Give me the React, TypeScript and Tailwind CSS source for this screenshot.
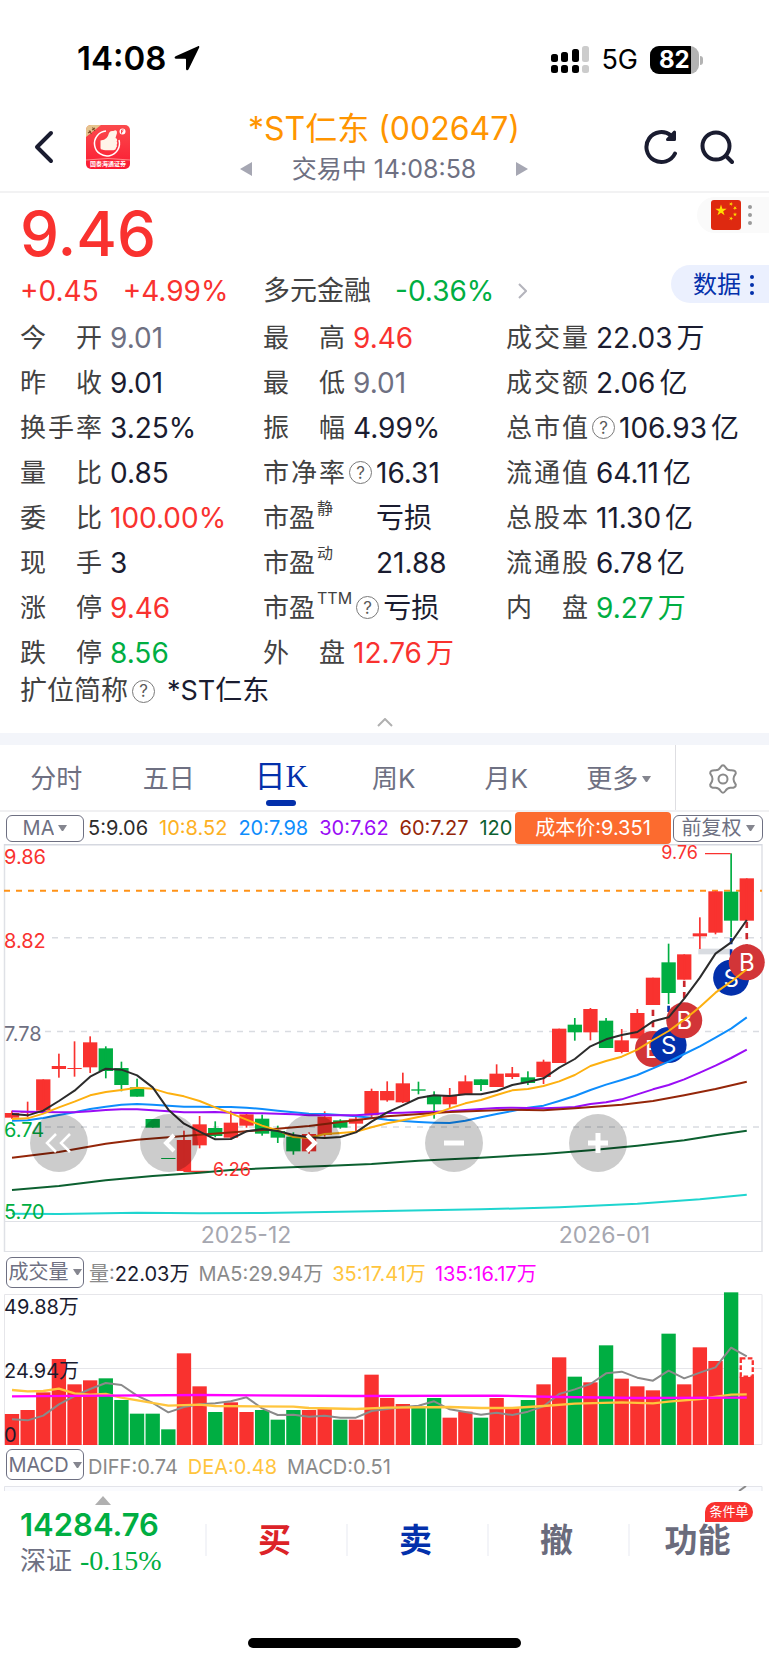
import { useState } from "react";
import clsx from "clsx";

// Chart data is stored in thirds of a pixel, one entry per trading day.
const UNIT = 1 / 3;
const FIRST_X = 36;
const STEP = 46.9;
const BODY = 43;

const RED = "#f9322f";
const GREEN = "#00ae42";

// [open/close top, open/close bottom, high, low]
const candles: [number, number, number, number][] = [
  [822, 836, 815, 840],
  [817, 821, 788, 835],
  [721, 815, 721, 815],
  [681, 690, 644, 716],
  [687, 690, 607, 713],
  [610, 685, 592, 702],
  [628, 696, 622, 718],
  [687, 738, 668, 757],
  [745, 773, 719, 773],
  [840, 866, 840, 866],
  [957, 960, 957, 960],
  [903, 996, 875, 998],
  [856, 919, 831, 928],
  [867, 891, 847, 895],
  [851, 896, 815, 898],
  [826, 860, 824, 866],
  [839, 884, 827, 890],
  [876, 896, 860, 912],
  [893, 937, 880, 947],
  [885, 937, 880, 944],
  [833, 888, 817, 893],
  [844, 866, 841, 869],
  [839, 854, 834, 880],
  [756, 829, 749, 835],
  [756, 784, 727, 788],
  [733, 790, 701, 792],
  [751, 755, 728, 766],
  [770, 796, 757, 839],
  [770, 796, 747, 808],
  [727, 766, 709, 766],
  [721, 738, 721, 756],
  [704, 744, 676, 744],
  [703, 714, 684, 720],
  [715, 732, 697, 738],
  [668, 714, 662, 735],
  [569, 672, 569, 672],
  [557, 580, 537, 605],
  [510, 580, 507, 604],
  [545, 627, 537, 627],
  [604, 639, 570, 643],
  [522, 598, 510, 598],
  [416, 498, 416, 498],
  [370, 462, 314, 495],
  [346, 422, 346, 422],
  [283, 292, 235, 330],
  [157, 281, 157, 286],
  [158, 245, 43, 295],
  [118, 245, 118, 245],
];

const fallingDays = [
  6, 7, 8, 9, 10, 13, 16, 17, 18, 21, 26, 27, 30, 33, 36, 38, 42, 46,
];

const volumeTops = [
  495, 483, 430, 330, 406, 394, 388, 453, 494, 494, 541, 313, 412, 489, 460,
  489, 483, 512, 483, 483, 480, 512, 512, 377, 447, 465, 475, 447, 506, 488,
  506, 447, 477, 453, 406, 325, 383, 400, 289, 389, 412, 424, 254, 406, 295,
  336, 130, 383,
];

const ma5 = [
  825, 829, 815, 786, 755, 713, 689, 692, 709, 745, 812, 854, 878, 901, 900,
  877, 870, 876, 888, 895, 897, 894, 880, 848, 820, 799, 777, 769, 771, 766,
  766, 756, 738, 729, 718, 686, 660, 622, 601, 588, 579, 547, 535, 479, 416,
  344, 310, 243,
];
const ma10 = [
  840, 838, 824, 805, 788, 769, 759, 753, 746, 749, 763, 772, 786, 805, 823,
  842, 860, 874, 894, 897, 885, 882, 878, 865, 853, 844, 834, 825, 808, 793,
  783, 768, 754, 750, 741, 727, 708, 681, 666, 653, 632, 603, 576, 542, 504,
  461, 428, 391,
];
const ma20 = [
  845, 844, 837, 828, 820, 810, 803, 797, 795, 797, 800, 803, 803, 804, 804,
  806, 810, 815, 820, 824, 825, 828, 832, 836, 842, 846, 849, 851, 852, 845,
  835, 825, 816, 806, 800, 786, 771, 753, 737, 723, 708, 688, 668, 645, 622,
  596, 569, 535,
];
const ma30 = [
  817, 818, 819, 820, 820, 817, 813, 811, 811, 814, 817, 820, 820, 819, 821,
  822, 823, 824, 826, 829, 829, 829, 829, 826, 822, 821, 819, 818, 817, 813,
  810, 807, 806, 807, 808, 806, 804, 795, 790, 781, 766, 751, 738, 721, 701,
  680, 657, 632,
];
const volumeMa5 = [
  511, 514, 500, 466, 441, 420, 402, 408, 440, 462, 490, 474, 466, 463, 457,
  445, 478, 498, 497, 503, 500, 506, 506, 486, 480, 474, 470, 457, 481, 489,
  497, 491, 498, 488, 472, 435, 421, 405, 373, 368, 386, 395, 365, 388, 371,
  355, 296, 322,
];

// Slow averages only keep the days where they bend: [day, y]
const ma60: Point[] = [
  [0, 956], [3, 939], [6, 914], [8, 902], [12, 887], [15, 877], [19, 861],
  [24, 832], [28, 819], [32, 812], [34, 814], [36, 808], [39, 797], [41, 786],
  [43, 769], [45, 750], [47, 728],
];
const ma120: Point[] = [
  [0, 1053], [3, 1041], [6, 1024], [9, 1011], [12, 1001], [14, 993],
  [17, 986], [20, 981], [23, 975], [26, 965], [30, 956], [34, 945],
  [37, 934], [40, 920], [43, 904], [45, 889], [47, 875],
];
const ma250: Point[] = [
  [0, 1124], [3, 1125], [8, 1121], [12, 1123], [16, 1122], [23, 1117],
  [30, 1111], [35, 1105], [40, 1094], [44, 1081], [47, 1067],
];
const volumeMa35: Point[] = [
  [0, 423], [1, 427], [2, 426], [3, 419], [4, 433], [5, 437], [6, 435],
  [7, 446], [10, 470], [12, 467], [13, 471], [18, 473], [19, 477], [22, 480],
  [24, 476], [28, 474], [30, 477], [32, 477], [34, 471], [36, 464],
  [39, 460], [41, 463], [42, 458], [44, 450], [46, 437], [47, 436],
];
const volumeMa135: Point[] = [
  [0, 442], [6, 440], [12, 438], [22, 441], [31, 440], [35, 444], [40, 447],
  [47, 446],
];

type Point = [number, number];
type Tone = "ink" | "flat" | "up" | "down";

type Metric = {
  label: string;
  value: string;
  unit?: string;
  tone?: Tone;
  sup?: string;
  help?: boolean;
};

const metrics: (Metric | null)[] = [
  { label: "今开", value: "9.01", tone: "flat" },
  { label: "最高", value: "9.46", tone: "up" },
  { label: "成交量", value: "22.03", unit: "万" },
  { label: "昨收", value: "9.01" },
  { label: "最低", value: "9.01", tone: "flat" },
  { label: "成交额", value: "2.06", unit: "亿" },
  { label: "换手率", value: "3.25%" },
  { label: "振幅", value: "4.99%" },
  { label: "总市值", value: "106.93", unit: "亿", help: true },
  { label: "量比", value: "0.85" },
  { label: "市净率", value: "16.31", help: true },
  { label: "流通值", value: "64.11", unit: "亿" },
  { label: "委比", value: "100.00%", tone: "up" },
  { label: "市盈", sup: "静", value: "亏损" },
  { label: "总股本", value: "11.30", unit: "亿" },
  { label: "现手", value: "3" },
  { label: "市盈", sup: "动", value: "21.88" },
  { label: "流通股", value: "6.78", unit: "亿" },
  { label: "涨停", value: "9.46", tone: "up" },
  { label: "市盈", sup: "TTM", value: "亏损", help: true },
  { label: "内盘", value: "9.27", unit: "万", tone: "down" },
  { label: "跌停", value: "8.56", tone: "down" },
  { label: "外盘", value: "12.76", unit: "万", tone: "up" },
  null,
];

const toneClasses: Record<Tone, string> = {
  ink: "text-[#1a1c30]",
  flat: "text-[#6e7082]",
  up: "text-[#f9322f]",
  down: "text-[#00ae42]",
};

const periods = ["分时", "五日", "日K", "周K", "月K", "更多"];

export default function App() {
  return (
    <main className="min-w-0 overflow-hidden bg-white font-['Inter','Noto_Sans_CJK_SC',sans-serif] text-[#1a1c30]">
      <StatusBar />
      <Header />
      <Quote />
      <div className="h-3 bg-[#f3f5fa]" />
      <PeriodTabs />
      <PriceChart />
      <VolumeChart />
      <MacdRow />
      <TradeBar />
    </main>
  );
}

function StatusBar() {
  return (
    <div className="flex h-[94px] items-end justify-between pr-[66px] pb-4 pl-[77px] text-black">
      <div className="flex items-center gap-2">
        <span className="text-[33px] leading-10 font-semibold">14:08</span>
        <svg width="26" height="26" viewBox="0 0 26 26">
          <path d="M24 1.2 1.6 11.2c-1.6.8-1.2 2.6.5 2.6h9.2c.5 0 .7.2.7.7v9.2c0 1.7 1.8 2.1 2.6.5L25.2 2.5c.4-.9-.3-1.7-1.2-1.3z" />
        </svg>
      </div>
      <div className="flex items-center gap-3 pb-1">
        <svg width="38" height="28" viewBox="0 0 38 28">
          <rect x="0" y="8" width="7" height="8" rx="2.5" />
          <rect x="10" y="6" width="7" height="10" rx="2.5" />
          <rect x="21" y="3" width="7" height="13" rx="2.5" />
          <rect x="31" y="0" width="7" height="16" rx="2.5" fill="#ccc" />
          <rect x="0" y="19" width="7" height="8" rx="2.5" />
          <rect x="10" y="19" width="7" height="8" rx="2.5" />
          <rect x="21" y="19" width="7" height="8" rx="2.5" />
          <rect x="31" y="19" width="7" height="8" rx="2.5" fill="#ccc" />
        </svg>
        <span className="text-[27px] leading-7">5G</span>
        <div className="flex items-center gap-px">
          <div className="flex h-7 w-[49px] overflow-hidden rounded-[9px] bg-[#b3b3b3]">
            <span className="w-[41px] bg-black pl-[9px] text-[24px] leading-7 font-bold text-white">
              82
            </span>
          </div>
          <div className="h-[9px] w-[3px] rounded-r-full bg-[#b3b3b3]" />
        </div>
      </div>
    </div>
  );
}

function Header() {
  return (
    <header className="flex h-[99px] items-center border-b-2 border-[#f2f2f3] pt-2 pr-[35px] pl-[34px]">
      <div className="flex flex-1 items-center gap-8">
        <button aria-label="返回">
          <svg
            width="20"
            height="34"
            viewBox="0 0 20 34"
            fill="none"
            stroke="#1a1c30"
            strokeWidth="4"
            strokeLinecap="round"
            strokeLinejoin="round"
          >
            <path d="M17 3 3 17 17 31" />
          </svg>
        </button>
        <BrokerLogo />
      </div>
      <div className="flex flex-col items-center">
        <h1 className="text-[32px] leading-[44px] text-[#ff9500]">
          *ST仁东 (002647)
        </h1>
        <div className="flex items-center gap-10 text-[#6e7082]">
          <button aria-label="上一只">
            <svg width="12" height="14" viewBox="0 0 12 14" fill="#a6a7b3">
              <path d="M12 0v14L0 7z" />
            </svg>
          </button>
          <span className="text-[25px] leading-9">交易中 14:08:58</span>
          <button aria-label="下一只">
            <svg width="12" height="14" viewBox="0 0 12 14" fill="#a6a7b3">
              <path d="M0 0v14l12-7z" />
            </svg>
          </button>
        </div>
      </div>
      <div className="flex flex-1 items-center justify-end gap-[22px]">
        <button aria-label="刷新">
          <svg width="34" height="36" viewBox="0 0 34 36" fill="none">
            <path
              d="M31 24.5A15 15 0 1 1 27 6.5"
              stroke="#1a1c30"
              strokeWidth="4"
              strokeLinecap="round"
            />
            <path
              d="M30.5 3v7.5h-7z"
              fill="#1a1c30"
              stroke="#1a1c30"
              strokeWidth="3"
              strokeLinejoin="round"
            />
          </svg>
        </button>
        <button aria-label="搜索">
          <svg
            width="34"
            height="36"
            viewBox="0 0 34 36"
            fill="none"
            stroke="#1a1c30"
            strokeWidth="4"
            strokeLinecap="round"
          >
            <circle cx="16" cy="17" r="13.5" />
            <path d="m26 27 6 6" />
          </svg>
        </button>
      </div>
    </header>
  );
}

function BrokerLogo() {
  return (
    <svg width="44" height="44" viewBox="0 0 44 44">
      <defs>
        <linearGradient id="logo-red" x1="0" y1="0" x2="0" y2="1">
          <stop offset="0" stopColor="#fb4a4c" />
          <stop offset="1" stopColor="#fb1b32" />
        </linearGradient>
      </defs>
      <rect width="44" height="44" rx="5" fill="url(#logo-red)" />
      <path d="M5 0h10L0 12V5q0-5 5-5z" fill="#e6c48e" />
      <path
        d="m2 8 3-2M3 5.500 5.500 9M6 5l3-2M6.500 2.500 9 6"
        stroke="#80502a"
        strokeWidth="1.2"
        fill="none"
      />
      <path
        d="M20 6A12.500 12.500 0 1 0 33 15"
        fill="none"
        stroke="#fff"
        strokeWidth="1.5"
      />
      <path
        d="M14.500 15.500q4-.5 6-2.500 2-2.500 2.500-5 .8-2 3-2 1.500 0 2.500-.5 2.800-.8 2.500 2.500L29.500 13q2.500 1 1.200 3.500 1.300 1.500 0 3.200.8 1.800-.6 3 0 2.300-2.600 2.600H19.500q-2 0-3.500-.8-1.500 0-1.500-1.500z"
        fill="#fff4e8"
      />
      <circle cx="36.5" cy="6.5" r="3" fill="#fff" />
      <path
        d="M35.5 8.5V5h2.200M35.5 6.700h1.600"
        stroke="#fb4a4c"
        fill="none"
      />
      <path d="M0 35q22-3 44 0" fill="none" stroke="#ff8a8a" />
      <text
        x="22"
        y="41"
        textAnchor="middle"
        fontSize="6"
        fontWeight="700"
        fill="#fff"
      >
        国泰海通证券
      </text>
    </svg>
  );
}

function Quote() {
  return (
    <section>
      <div className="flex justify-between pt-1">
        <div className="flex-1 pl-5">
          <p className="pt-[7px] text-[62px] leading-[60px] font-medium text-[#f9322f]">
            9.46
          </p>
          <div className="mt-[9px] flex h-9 items-center text-[28px]">
            <p className="flex w-[243px] gap-6 text-[#f9322f]">
              <span>+0.45</span>
              <span>+4.99%</span>
            </p>
            <button className="flex items-center gap-6">
              <span className="text-[27px] text-[#424242]">多元金融</span>
              <span className="text-[#00ae42]">-0.36%</span>
              <svg
                width="9"
                height="16"
                viewBox="0 0 9 16"
                fill="none"
                stroke="#b4b4bc"
                strokeWidth="2"
              >
                <path d="m1 1 7 7-7 7" />
              </svg>
            </button>
          </div>
        </div>
        <div className="flex flex-col items-end gap-8">
          <button
            aria-label="市场"
            className="flex h-9 w-[72px] items-center gap-[6px] rounded-l-full bg-[#fafafa] pl-[14px]"
          >
            <Flag />
            <Dots className="fill-[#9a9a9a]" />
          </button>
          <button className="flex h-[38px] w-[98px] items-center gap-2 rounded-l-full bg-[#ebf0fe] pt-px pl-[22px] text-[24px] text-[#0330ab]">
            数据
            <Dots className="fill-[#0330ab]" />
          </button>
        </div>
      </div>

      <dl className="mt-[6px] grid grid-cols-[243fr_243fr_263fr] pl-5">
        {metrics.map((metric, i) =>
          metric ? <MetricCell key={i} {...metric} /> : <div key={i} />,
        )}
      </dl>
      <div className="flex h-8 items-center pl-5 text-[27px] text-[#424242]">
        扩位简称
        <HelpMark />
        <span className="pl-3 text-[#1a1c30]">*ST仁东</span>
      </div>
      <button
        aria-label="收起"
        className="flex h-[26px] w-full items-center justify-center pt-1"
      >
        <svg
          width="16"
          height="9"
          viewBox="0 0 16 9"
          fill="none"
          stroke="#b0b0b0"
          strokeWidth="2"
        >
          <path d="m1 8 7-7 7 7" />
        </svg>
      </button>
    </section>
  );
}

function MetricCell({ label, value, unit, tone = "ink", sup, help }: Metric) {
  return (
    <div className="flex h-[45px] items-center whitespace-nowrap">
      {sup ? (
        <dt
          className={clsx(
            "flex text-[26px] text-[#424242]",
            !help && "w-[105px]",
          )}
        >
          {label}
          <span className="-mt-[2px] pl-[2px] text-[16px]">{sup}</span>
        </dt>
      ) : (
        <dt className="flex w-[82px] justify-between text-[26px] text-[#424242]">
          {[...label].map((char) => (
            <span key={char}>{char}</span>
          ))}
        </dt>
      )}
      {help && <HelpMark />}
      <dd
        className={clsx(
          "text-[28px]",
          help ? "pl-1" : "pl-2",
          toneClasses[tone],
        )}
      >
        {value}
        {unit && <span className="ml-1">{unit}</span>}
      </dd>
    </div>
  );
}

function HelpMark() {
  return (
    <span className="ml-1 flex size-[23px] items-center justify-center rounded-full border border-[#7a7a7a] text-[17px] leading-5 text-[#5a5a5a]">
      ?
    </span>
  );
}

function Dots({ className }: { className: string }) {
  return (
    <svg width="6" height="22" viewBox="0 0 6 22" className={className}>
      <circle cx="3" cy="3" r="2" />
      <circle cx="3" cy="11" r="2" />
      <circle cx="3" cy="19" r="2" />
    </svg>
  );
}

function Flag() {
  const star =
    "M0-1 .225-.309.951-.309.363.118.588.809 0 .382-.588.809-.363.118-.951-.309-.225-.309z";

  return (
    <svg width="30" height="30" viewBox="0 0 30 30" fill="#ffde00">
      <rect width="30" height="30" rx="3" fill="#de2910" />
      <path d={star} transform="translate(10 10.5) scale(6)" />
      <path d={star} transform="translate(20 4) rotate(20) scale(2.2)" />
      <path d={star} transform="translate(24 8) rotate(40) scale(2.2)" />
      <path d={star} transform="translate(24 14.5) scale(2.2)" />
      <path d={star} transform="translate(20 18.5) rotate(20) scale(2.2)" />
    </svg>
  );
}

function PeriodTabs() {
  const [active, setActive] = useState("日K");

  return (
    <nav className="flex h-[67px] border-b-2 border-[#f0f0f2]">
      <div className="grid flex-1 grid-cols-6">
        {periods.map((period) => (
          <button
            key={period}
            onClick={() => setActive(period)}
            className={clsx(
              "relative flex items-center justify-center",
              period === active
                ? "font-['Liberation_Serif','Noto_Sans_CJK_SC',serif] text-[31px] text-[#0330ab]"
                : "pt-[2px] text-[26px] text-[#6e7082]",
            )}
          >
            {period}
            {period === "更多" && <Caret />}
            {period === active && (
              <span className="absolute bottom-1 h-[6px] w-[30px] rounded-full bg-[#0330ab]" />
            )}
          </button>
        ))}
      </div>
      <button
        aria-label="设置"
        className="flex w-[94px] items-center justify-center border-l border-[#dedee2] pt-[2px]"
      >
        <svg
          width="28"
          height="30"
          viewBox="0 0 28 30"
          fill="none"
          stroke="#8a8a8a"
          strokeWidth="2"
          strokeLinejoin="round"
        >
          <path d="M11.5 3.2Q14-.8 16.5 3.2 18.3 6.4 21.8 6.2 27 6 26.8 9.3 24.5 12.5 24.5 15T26.8 20.7Q27 24 21.8 23.8 18.3 23.6 16.5 26.8 14 30.8 11.5 26.8 9.7 23.6 6.2 23.8 1 24 1.2 20.7 3.5 17.5 3.5 15T1.2 9.3Q1 6 6.2 6.2 9.7 6.4 11.5 3.2Z" />
          <circle cx="14" cy="15" r="4.5" />
        </svg>
      </button>
    </nav>
  );
}

function Caret() {
  return (
    <svg
      width="9"
      height="6"
      viewBox="0 0 9 6"
      className="pointer-events-none ml-1 shrink-0 fill-[#85868f]"
    >
      <path d="M0 0h9L5.5 5.5q-1 1-2 0z" />
    </svg>
  );
}

function Dropdown({ label, options, className }: DropdownProps) {
  return (
    <label
      className={clsx(
        "flex shrink-0 items-center justify-center rounded-md border border-[#6e7082] text-[20px] text-[#6e7082]",
        className,
      )}
    >
      <select
        aria-label={label}
        className="appearance-none bg-transparent leading-6 outline-none [field-sizing:content]"
      >
        {options.map((option) => (
          <option key={option}>{option}</option>
        ))}
      </select>
      <Caret />
    </label>
  );
}

type DropdownProps = {
  label: string;
  options: string[];
  className: string;
};

function dayX(day: number) {
  return FIRST_X + day * STEP;
}

function AverageLine({ points, color, width = 6 }: AverageLineProps) {
  return (
    <polyline
      points={points
        .map((p, i) => (typeof p === "number" ? [i, p] : p))
        .map(([day, y]) => `${dayX(day)},${y}`)
        .join(" ")}
      fill="none"
      stroke={color}
      strokeWidth={width}
      strokeLinejoin="round"
    />
  );
}

type AverageLineProps = {
  points: (number | Point)[];
  color: string;
  width?: number;
};

// Dashes that tie a trade marker to its candle: [day, from, to, color]
const tradeTies: [number, number, number, string][] = [
  [41, 512, 578, "#c9262c"],
  [42, 500, 570, "#0330ab"],
  [43, 425, 492, "#c9262c"],
  [46, 297, 365, "#0330ab"],
  [47, 248, 318, "#c9262c"],
];

const trades: [number, number, "B" | "S"][] = [
  [41, 630, "B"],
  [42, 618, "S"],
  [43, 544, "B"],
  [46, 416, "S"],
  [47, 370, "B"],
];

function PriceChart() {
  return (
    <section>
      <div className="flex h-8 items-center pr-[6px] pl-[6px] text-[20px] whitespace-nowrap">
        <Dropdown
          label="主图指标"
          options={["MA", "BOLL"]}
          className="h-[27px] w-[78px]"
        />
        <div className="flex flex-1 gap-[11px] pl-1">
          <span className="text-[#2c2c2c]">5:9.06</span>
          <span className="text-[#fdb022]">10:8.52</span>
          <span className="text-[#0e8dfc]">20:7.98</span>
          <span className="text-[#9a0df5]">30:7.62</span>
          <span className="text-[#942609]">60:7.27</span>
          <span className="text-[#0c6030]">120</span>
        </div>
        <span className="mr-[2px] flex h-8 w-[156px] shrink-0 items-center justify-center rounded-sm bg-[#fc6b2f] text-white">
          成本价:9.351
        </span>
        <Dropdown
          label="复权"
          options={["前复权", "后复权"]}
          className="h-[27px] w-[90px]"
        />
      </div>

      <div className="relative h-[408px]">
        <svg
          viewBox="0 0 769 408"
          preserveAspectRatio="none"
          className="h-full w-full"
        >
          <g fill="none" stroke="#dfe1e6" strokeWidth="1.5">
            <path d="M4.5 0V408M762 0V408" />
            <path d="M4 377.5H762M4 407.5H762" strokeWidth="1" />
            <path d="M4 .5H762" stroke="#d5d8e0" strokeWidth="2" />
            <path
              d="M52 93.7H762M45 187.5H762M45 283H762"
              strokeDasharray="6 6"
              stroke="#d9dce1"
            />
          </g>
          <path
            d="M4 46.700H762"
            stroke="#ff9217"
            strokeWidth="2"
            strokeDasharray="6 6"
          />
          <g transform={`translate(0 -5) scale(${UNIT})`}>
            <rect x="2095" y="329" width="97" height="17" fill="#d9dce1" />
            {candles.map(([top, bottom, high, low], day) => (
              <g key={day} fill={fallingDays.includes(day) ? GREEN : RED}>
                <rect
                  x={dayX(day) - BODY / 2}
                  y={top}
                  width={BODY}
                  height={bottom - top}
                />
                <rect
                  x={dayX(day) - 2.5}
                  y={high}
                  width={5}
                  height={low - high}
                />
              </g>
            ))}
            <path
              d="M2115 44H2192M552 997H628"
              stroke={RED}
              strokeWidth="4"
            />
            {tradeTies.map(([day, from, to, color]) => (
              <path
                key={day}
                d={`M${dayX(day)} ${from}V${to}`}
                stroke={color}
                strokeWidth="8"
                strokeDasharray="19 15"
              />
            ))}
          </g>
          {trades.map(([day, y, side]) => (
            <g
              key={day}
              transform={`translate(${dayX(day) * UNIT} ${y * UNIT - 5})`}
            >
              <circle r="18" fill={side === "B" ? "#d23538" : "#0330ab"} />
              <text y="9" textAnchor="middle" fontSize="24" fill="#fff">
                {side}
              </text>
            </g>
          ))}
          <g transform={`translate(0 -5) scale(${UNIT})`}>
            <AverageLine points={ma250} color="#1fd5cf" />
            <AverageLine points={ma120} color="#0c6030" />
            <AverageLine points={ma20} color="#0e8dfc" />
            <AverageLine points={ma30} color="#9a0df5" />
            <AverageLine points={ma60} color="#942609" />
            <AverageLine points={ma10} color="#fdb010" />
            <AverageLine points={ma5} color="#2c2c2c" />
          </g>
        </svg>

        <div className="absolute inset-0 text-[20px] leading-6">
          <span className="absolute top-px left-1 text-[#f9322f]">9.86</span>
          <span className="absolute top-[85px] left-1 text-[#f9322f]">
            8.82
          </span>
          <span className="absolute top-[178px] left-1 text-[#6e7082]">
            7.78
          </span>
          <span className="absolute top-[274px] left-1 text-[#00ae42]">
            6.74
          </span>
          <span className="absolute top-[356px] left-1 text-[#00ae42]">
            5.70
          </span>
          <span className="absolute -top-[3px] left-[86%] text-[18px] text-[#f9322f]">
            9.76
          </span>
          <span className="absolute top-[314px] left-[213px] text-[18px] text-[#f9322f]">
            6.26
          </span>
          <span className="absolute top-[379px] left-[32%] -translate-x-1/2 text-[23px] text-[#a6a7b0]">
            2025-12
          </span>
          <span className="absolute top-[379px] left-[78.6%] -translate-x-1/2 text-[23px] text-[#a6a7b0]">
            2026-01
          </span>
        </div>

        <ChartButton label="最早" className="left-[7.7%]">
          <path d="M-3-9-12 0l9 9M11-9 2 0l9 9" />
        </ChartButton>
        <ChartButton label="左移" className="left-[22%]">
          <path d="M5-8-3 0l8 8" strokeWidth="4" />
        </ChartButton>
        <ChartButton label="右移" className="left-[40.6%]">
          <path d="M-5-8 3 0l-8 8" strokeWidth="4" />
        </ChartButton>
        <ChartButton label="缩小" className="left-[59.1%]">
          <path d="M-10 0h20" strokeWidth="5" />
        </ChartButton>
        <ChartButton label="放大" className="left-[77.7%]">
          <path d="M-10 0h20M0-10v20" strokeWidth="5" />
        </ChartButton>
      </div>
    </section>
  );
}

function ChartButton({ label, className, children }: ChartButtonProps) {
  return (
    <button
      aria-label={label}
      className={clsx(
        "absolute top-[270px] size-[58px] -translate-x-1/2 rounded-full bg-black/20",
        className,
      )}
    >
      <svg
        viewBox="-29 -29 58 58"
        fill="none"
        stroke="#fff"
        strokeWidth="2.5"
      >
        {children}
      </svg>
    </button>
  );
}

type ChartButtonProps = {
  label: string;
  className: string;
  children: React.ReactNode;
};

function VolumeChart() {
  return (
    <section>
      <div className="flex h-10 items-center pl-[6px] text-[20px] whitespace-nowrap">
        <Dropdown
          label="副图指标"
          options={["成交量", "成交额"]}
          className="h-[31px] w-[78px]"
        />
        <p className="flex gap-[9px] pt-1 pl-[5px] text-[#8a8a8a]">
          <span>
            量:<span className="text-[#1a1c30]">22.03万</span>
          </span>
          <span>MA5:29.94万</span>
          <span className="text-[#ffc53d]">35:17.41万</span>
          <span className="text-[#ff00ff]">135:16.17万</span>
        </p>
      </div>
      <div className="relative h-[153px]">
        <svg
          viewBox="0 0 769 153"
          preserveAspectRatio="none"
          className="h-full w-full"
        >
          <path
            d="M4.5 2.5H762V152.5H4.5ZM4.5 76.5H762"
            fill="none"
            stroke="#e6e6ea"
          />
          <g transform={`translate(0 -43) scale(${UNIT})`}>
            {volumeTops.map((top, day) => (
              <rect
                key={day}
                x={dayX(day) - BODY / 2}
                y={top}
                width={BODY}
                height={588 - top}
                fill={fallingDays.includes(day) ? GREEN : RED}
              />
            ))}
            <rect
              x={dayX(47) - 18}
              y="328"
              width="36"
              height="55"
              fill="#fff"
              stroke={RED}
              strokeWidth="7"
              strokeDasharray="14 7"
            />
            <AverageLine points={volumeMa5} color="#8a8a8a" />
            <AverageLine points={volumeMa35} color="#ffc53d" width={7} />
            <AverageLine points={volumeMa135} color="#ff00ff" width={7} />
          </g>
        </svg>
        <div className="absolute inset-0 text-[20px] leading-6">
          <span className="absolute top-[3px] left-1">49.88万</span>
          <span className="absolute top-[67px] left-1">24.94万</span>
          <span className="absolute top-[131px] left-1">0</span>
        </div>
      </div>
    </section>
  );
}

function MacdRow() {
  return (
    <section>
      <div className="flex h-[41px] items-center pb-[2px] pl-[6px] text-[20px] whitespace-nowrap">
        <Dropdown
          label="第二副图指标"
          options={["MACD", "KDJ"]}
          className="h-[31px] w-[78px]"
        />
        <p className="flex gap-[10px] pt-1 pl-1 text-[#8a8a8a]">
          <span>DIFF:0.74</span>
          <span className="text-[#ffc53d]">DEA:0.48</span>
          <span>MACD:0.51</span>
        </p>
      </div>
      <svg
        viewBox="0 0 769 5"
        preserveAspectRatio="none"
        className="block h-[5px] w-full"
      >
        <path d="M4.5 5V.5H762V5" fill="#fafbfe" stroke="#e3e4ea" />
        <path d="M739 5 746 0" stroke="#8a8a8a" strokeWidth="2" />
      </svg>
    </section>
  );
}

function TradeBar() {
  return (
    <footer className="bg-white">
      <div className="grid h-[98px] grid-cols-[205fr_141fr_141fr_141fr_141fr] items-center">
        <button className="relative h-full pl-5 text-left">
          <svg
            width="16"
            height="9"
            viewBox="0 0 16 9"
            className="absolute top-[5px] left-[95px] fill-[#b0b0b0]"
          >
            <path d="M8 0 16 9H0z" />
          </svg>
          <span className="block pt-[6px] text-[31px] leading-9 font-semibold text-[#00ae42]">
            14284.76
          </span>
          <span className="flex items-center gap-2 text-[26px] leading-9 text-[#6e7082]">
            深证
            <span className="font-['Liberation_Serif',serif] text-[28px] text-[#00ae42]">
              -0.15%
            </span>
          </span>
        </button>
        <TradeButton className="text-[#dc2328]">买</TradeButton>
        <TradeButton className="text-[#0330ab]">卖</TradeButton>
        <TradeButton className="text-[#6a6b7c]">撤</TradeButton>
        <TradeButton className="text-[#6a6b7c]">
          功能
          <span className="absolute -top-[22px] right-4 flex h-5 w-[48px] items-center justify-center rounded-t-full rounded-br-full bg-[#f9322f] text-[13px] font-normal text-white">
            条件单
          </span>
        </TradeButton>
      </div>
      <div className="flex h-[75px] items-end justify-center pb-4">
        <div className="h-[10px] w-[273px] rounded-full bg-black" />
      </div>
    </footer>
  );
}

function TradeButton({ className, children }: TradeButtonProps) {
  return (
    <button
      className={clsx(
        "relative flex h-8 items-center justify-center border-l-2 border-[#f3f4f8] pt-[2px] pr-1 text-[33px] font-semibold",
        className,
      )}
    >
      {children}
    </button>
  );
}

type TradeButtonProps = {
  className: string;
  children: React.ReactNode;
};
